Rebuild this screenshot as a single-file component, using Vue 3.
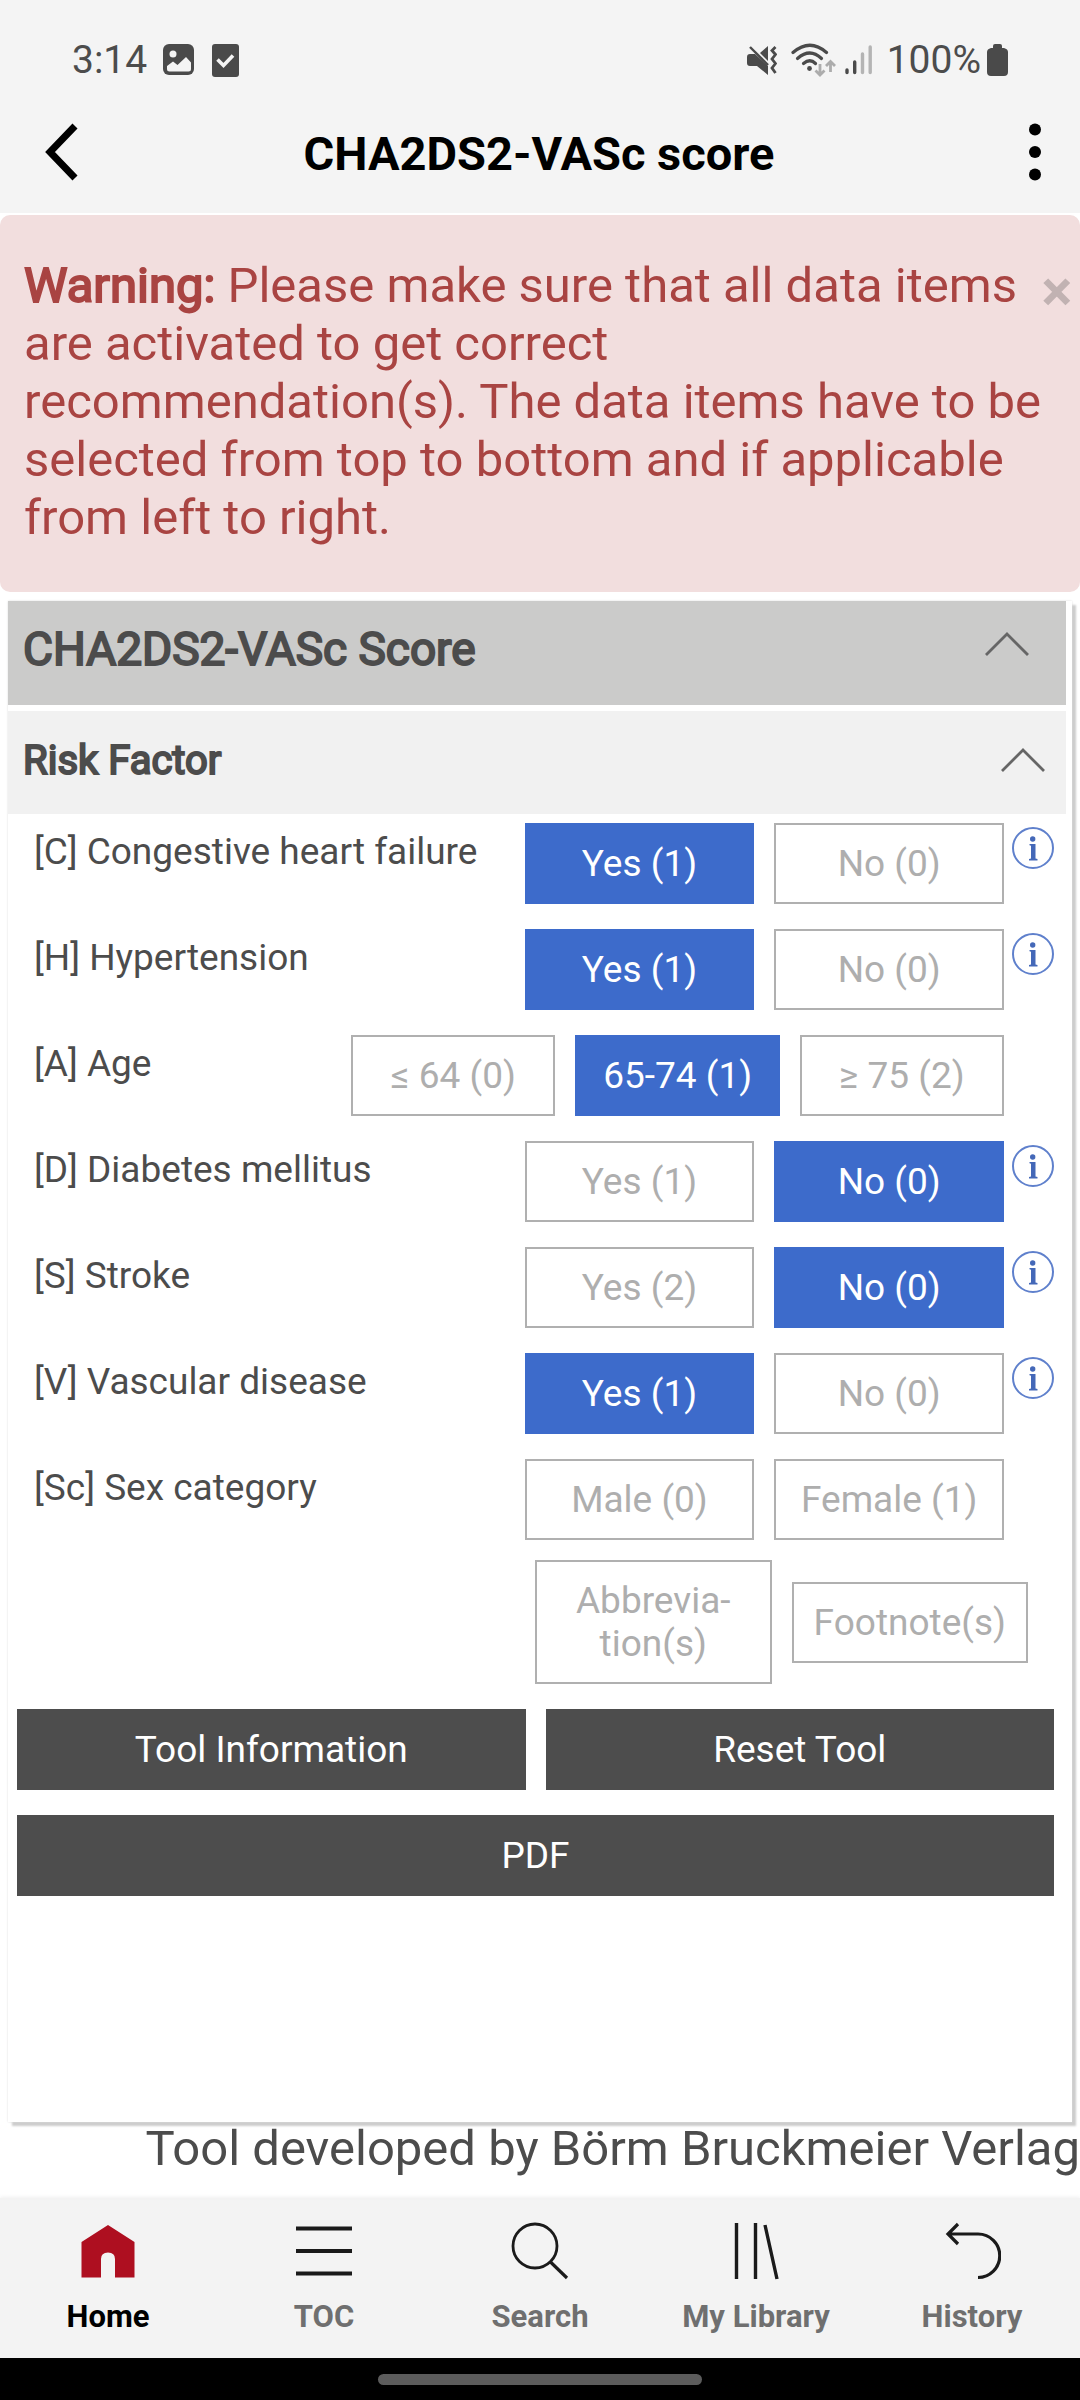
<script setup>
import { ref } from 'vue'

const warningVisible = ref(true)
const scoreOpen = ref(true)
const riskOpen = ref(true)

const initialFactors = () => [
  { label: '[C] Congestive heart failure', options: ['Yes (1)', 'No (0)'], selected: 0, info: true },
  { label: '[H] Hypertension', options: ['Yes (1)', 'No (0)'], selected: 0, info: true },
  { label: '[A] Age', options: ['≤ 64 (0)', '65-74 (1)', '≥ 75 (2)'], selected: 1, info: false },
  { label: '[D] Diabetes mellitus', options: ['Yes (1)', 'No (0)'], selected: 1, info: true },
  { label: '[S] Stroke', options: ['Yes (2)', 'No (0)'], selected: 1, info: true },
  { label: '[V] Vascular disease', options: ['Yes (1)', 'No (0)'], selected: 0, info: true },
  { label: '[Sc] Sex category', options: ['Male (0)', 'Female (1)'], selected: -1, info: false }
]
const factors = ref(initialFactors())

function resetTool() {
  factors.value = initialFactors().map((f) => ({ ...f, selected: -1 }))
}
</script>

<template>
  <div class="page">
    <header class="top">
      <div class="status">
        <div class="status-side">
          <span class="clock">3:14</span>
          <svg class="ic-image" width="32" height="32" viewBox="0 0 32 32" aria-hidden="true">
            <rect width="31" height="31" rx="6" fill="#4a4a4a" />
            <circle cx="10" cy="10" r="3.5" fill="#f4f4f4" />
            <path d="M4 22 10 17.500 14.500 21 23 13 28 18.500V25Q28 27.500 25.500 27.500H6.500Q4 27.500 4 25Z" fill="#f4f4f4" />
          </svg>
          <svg width="27" height="33" viewBox="0 0 27 33" aria-hidden="true">
            <rect width="27" height="33" rx="3" fill="#4a4a4a" />
            <path d="M5.500 15.500 11.500 21.500 21 11.500" fill="none" stroke="#f4f4f4" stroke-width="3.600" />
          </svg>
        </div>
        <div class="status-side">
          <svg width="30" height="30" viewBox="0 0 30 30" aria-hidden="true">
            <path d="M0 12Q0 9 3 9H8L21 21V30L10 21H3Q0 21 0 18Z" fill="#4a4a4a" />
            <path d="M21 1V16L13 8Z" fill="#4a4a4a" />
            <path d="M3 2 21 20" stroke="#4a4a4a" stroke-width="2.400" />
            <path d="M28.500 2 25 5.500 28.500 9.500 25 14 28.500 18.500 25 23 28.500 28" fill="none" stroke="#4a4a4a" stroke-width="2.800" />
          </svg>
          <svg class="ic-wifi" width="45" height="34" viewBox="0 0 45 34" aria-hidden="true">
            <g fill="none" stroke="#4a4a4a" stroke-width="3.200" stroke-linecap="round">
              <path d="M2 9.500Q19 -5 35.500 9.500" />
              <path d="M6.500 15.500Q19 4.500 30.500 15.500" />
              <path d="M12.500 20.500Q19 15 24.500 20.500" />
            </g>
            <circle cx="18.500" cy="25.500" r="2.400" fill="#4a4a4a" />
            <path d="M29 21V31M24.500 27.500 29 32 33.500 27.500M39.500 29V19M35 23 39.500 18.500 44 23" fill="none" stroke="#acacac" stroke-width="2.800" />
          </svg>
          <svg class="ic-signal" width="28" height="30" viewBox="0 0 28 30" aria-hidden="true">
            <g stroke-width="3.400" stroke-linecap="round">
              <path d="M2 25V27.500M9.700 17V27.500" stroke="#4a4a4a" />
              <path d="M17.500 9V27.500M25.200 2V27.500" stroke="#b4b4b4" />
            </g>
          </svg>
          <span class="battery">100%</span>
          <svg width="21" height="32" viewBox="0 0 21 32" aria-hidden="true">
            <path d="M6 2Q6 0 8 0H13Q15 0 15 2V4H17Q21 5 21 8V28Q21 32 17 32H4Q0 32 0 28V8Q0 5 4 4H6Z" fill="#4a4a4a" />
          </svg>
        </div>
      </div>
      <div class="appbar">
        <button class="icon-btn" aria-label="Back">
          <svg width="34" height="58" viewBox="0 0 34 58"><path d="M30 3 5 29 30 55" fill="none" stroke="#000" stroke-width="7" /></svg>
        </button>
        <h1>CHA2DS2-VASc score</h1>
        <button class="icon-btn end" aria-label="More options">
          <svg width="12" height="58" viewBox="0 0 12 58"><circle cx="6" cy="6.500" r="6" /><circle cx="6" cy="29" r="6" /><circle cx="6" cy="51.500" r="6" /></svg>
        </button>
      </div>
    </header>

    <main>
      <div v-if="warningVisible" class="alert" role="alert">
        <button class="close" aria-label="Close" @click="warningVisible = false">×</button>
        <strong class="heavy">Warning:</strong> Please make sure that all data items are activated to get correct recommendation(s). The data items have to be selected from top to bottom and if applicable from left to right.
      </div>

      <section class="panel">
        <button class="bar bar-score" :aria-expanded="scoreOpen" @click="scoreOpen = !scoreOpen">
          <span class="heavy">CHA2DS2-VASc Score</span>
          <svg width="44" height="26" viewBox="0 0 44 26" aria-hidden="true"><path d="M1 24 22 3 43 24" fill="none" stroke="#666" stroke-width="2.800" /></svg>
        </button>
        <template v-if="scoreOpen">
          <button class="bar bar-risk" :aria-expanded="riskOpen" @click="riskOpen = !riskOpen">
            <span class="heavy">Risk Factor</span>
            <svg width="44" height="26" viewBox="0 0 44 26" aria-hidden="true"><path d="M1 24 22 3 43 24" fill="none" stroke="#666" stroke-width="2.800" /></svg>
          </button>
          <div v-if="riskOpen" class="rows">
            <div v-for="(f, i) in factors" :key="f.label" class="row" role="group" :aria-labelledby="'factor-' + i">
              <span :id="'factor-' + i" class="label">{{ f.label }}</span>
              <div class="options" :class="{ three: f.options.length === 3 }">
                <button
                  v-for="(o, n) in f.options"
                  :key="o"
                  class="opt"
                  :class="{ on: f.selected === n }"
                  :aria-pressed="f.selected === n"
                  @click="f.selected = n"
                >{{ o }}</button>
              </div>
              <div class="info-slot">
                <button v-if="f.info" class="info" :aria-label="'About ' + f.label">
                  <svg width="42" height="42" viewBox="0 0 42 42">
                    <circle cx="21" cy="21" r="20" fill="none" stroke="#5f80cc" stroke-width="2" />
                    <circle cx="20.700" cy="12" r="2.700" fill="#4468b8" />
                    <path d="M17.500 17H23.500V31.500L25.500 32V33.500H17V32L19 31.500V18.800L17.500 18.300Z" fill="#4468b8" />
                  </svg>
                </button>
              </div>
            </div>
          </div>
          <div class="extras">
            <button class="opt">Abbrevia-<br />tion(s)</button>
            <button class="opt">Footnote(s)</button>
          </div>
          <div class="actions">
            <button class="dark">Tool Information</button>
            <button class="dark" @click="resetTool">Reset Tool</button>
            <button class="dark wide">PDF</button>
          </div>
        </template>
      </section>
      <p class="credit">Tool developed by Börm Bruckmeier Verlag</p>
    </main>

    <nav class="tabs">
      <a href="#home" class="active" aria-current="page">
        <svg width="58" height="58" viewBox="0 0 58 58" aria-hidden="true"><path d="M29 3 55.500 20V55.500H36V37Q36 30.500 29 30.500 22 30.500 22 37V55.500H2.500V20Z" fill="#ae0f20" /></svg>
        Home
      </a>
      <a href="#toc">
        <svg width="58" height="58" viewBox="0 0 58 58" aria-hidden="true"><path d="M1 6.500H57M1 29H57M1 51.500H57" stroke="#1a1a1a" stroke-width="4" /></svg>
        TOC
      </a>
      <a href="#search">
        <svg width="58" height="58" viewBox="0 0 58 58" aria-hidden="true"><circle cx="24" cy="24" r="22" fill="none" stroke="#1a1a1a" stroke-width="2.800" /><path d="M39.500 40 56 56" stroke="#1a1a1a" stroke-width="3.200" /></svg>
        Search
      </a>
      <a href="#library">
        <svg width="58" height="58" viewBox="0 0 58 58" aria-hidden="true"><path d="M9.500 1V57M28.500 1V57M38 3 50 57" stroke="#1a1a1a" stroke-width="3.400" /></svg>
        My Library
      </a>
      <a href="#history">
        <svg width="58" height="58" viewBox="0 0 58 58" aria-hidden="true"><path d="M15 2 5 12 15 22M5 12H35A21.700 21.700 0 0 1 35 55.500" fill="none" stroke="#1a1a1a" stroke-width="3.200" /></svg>
        History
      </a>
    </nav>
    <div class="gesture"><span></span></div>
  </div>
</template>

<style>
body {
  margin: 0;
  background: #fff;
}
</style>

<style scoped>
.page {
  display: flex;
  flex-direction: column;
  min-height: 100vh;
  font-family: Roboto, "Liberation Sans", sans-serif;
  color: #4c4c4c;
}
button {
  margin: 0;
  padding: 0;
  border: 0;
  border-radius: 0;
  background: none;
  font: inherit;
  color: inherit;
  cursor: pointer;
}
svg {
  display: block;
  flex: none;
}

.top {
  height: 213px;
  box-sizing: border-box;
  background: #f4f4f4;
}
.status {
  display: flex;
  justify-content: space-between;
  align-items: center;
  padding: 36px 72px 0;
  height: 48px;
  font-size: 39px;
  line-height: 48px;
}
.status-side {
  display: flex;
  align-items: center;
}
.clock {
  margin-right: 16px;
}
.ic-image {
  margin-right: 17px;
}
.ic-wifi {
  margin-left: 14px;
}
.ic-signal {
  margin: 0 14px 0 9px;
}
.battery {
  margin-right: 6px;
}
.appbar {
  display: grid;
  grid-template-columns: 88px 1fr 96px;
  align-items: center;
  height: 58px;
  padding: 0 39px 0 45px;
  margin-top: 38px;
}
h1 {
  margin: 4px 0 0;
  font-size: 47px;
  line-height: 56px;
  font-weight: 700;
  text-align: center;
  color: #000;
}
.icon-btn {
  justify-self: start;
}
.icon-btn.end {
  justify-self: end;
}

main {
  flex: 1;
  padding-top: 2px;
}
.alert {
  padding: 42px 24px 45px;
  border-radius: 10px;
  background: #f2dede;
  color: #a94442;
  font-size: 49px;
  line-height: 58px;
}
.heavy {
  font-weight: 400;
  -webkit-text-stroke: 2px currentColor;
}
.close {
  float: right;
  width: 34px;
  margin-right: -18px;
  color: #c1b2b2;
  font-size: 58px;
  line-height: 68px;
  font-weight: 700;
}

.panel {
  margin: 9px 8px 0;
  padding-bottom: 226px;
  background: #fff;
  box-shadow: 0 0 2px #ddd, 4px 4px 2px #ccc;
}
.bar {
  display: flex;
  justify-content: space-between;
  align-items: flex-start;
  width: calc(100% - 6px);
  box-sizing: border-box;
  padding-left: 15px;
  text-align: left;
}
.bar-score {
  height: 104px;
  padding-top: 20px;
  padding-right: 37px;
  background: #cbcbca;
  font-size: 46px;
  line-height: 56px;
}
.bar-score svg {
  margin-top: 10px;
}
.bar-risk {
  height: 103px;
  margin-top: 6px;
  padding-top: 25px;
  padding-right: 21px;
  background: #f1f1f1;
  font-size: 40px;
  line-height: 50px;
}
.bar-risk svg {
  margin-top: 11px;
}
.rows {
  display: flex;
  flex-direction: column;
  gap: 25px;
  padding: 9px 18px 0 26px;
  font-size: 37px;
  line-height: 43px;
}
.row {
  display: flex;
}
.label {
  flex: 1;
  padding-top: 7px;
  white-space: nowrap;
}
.options {
  display: flex;
  gap: 20px;
  width: 47%;
}
.options.three {
  width: 64%;
}
.opt {
  flex: 1 1 0;
  padding: 17px 0;
  border: 2px solid #b0b0b0;
  background: #fff;
  color: #aeaeae;
  font-size: 37px;
  line-height: 43px;
  white-space: nowrap;
}
.opt.on {
  border-color: #3d6bcb;
  background: #3d6bcb;
  color: #fff;
}
.info-slot {
  width: 42px;
  margin-left: 8px;
  padding-top: 4px;
}
.info {
  display: block;
}
.extras {
  display: flex;
  align-items: center;
  gap: 20px;
  width: 493px;
  margin: 20px 44px 0 auto;
}
.actions {
  display: grid;
  grid-template-columns: 1fr 1fr;
  gap: 25px 20px;
  padding: 25px 18px 0 9px;
}
.dark {
  height: 81px;
  background: #4d4d4d;
  color: #fff;
  font-size: 37px;
  line-height: 43px;
}
.wide {
  grid-column: 1 / -1;
}
.credit {
  margin: 0;
  padding-bottom: 20px;
  font-size: 49px;
  line-height: 54px;
  text-align: right;
  white-space: nowrap;
}

.tabs {
  display: grid;
  grid-template-columns: repeat(5, 1fr);
  padding: 24px 0 25px;
  background: #f3f3f3;
  box-shadow: 0 -1px 4px #f0f0f0;
}
.tabs a {
  display: flex;
  flex-direction: column;
  align-items: center;
  gap: 21px;
  font-size: 31px;
  line-height: 32px;
  font-weight: 700;
  color: #6f6f6f;
  text-decoration: none;
}
.tabs a.active {
  color: #000;
}
.gesture {
  display: flex;
  justify-content: center;
  align-items: center;
  height: 42px;
  background: #000;
}
.gesture span {
  width: 30%;
  height: 11px;
  border-radius: 6px;
  background: #5c5c5c;
}
</style>
